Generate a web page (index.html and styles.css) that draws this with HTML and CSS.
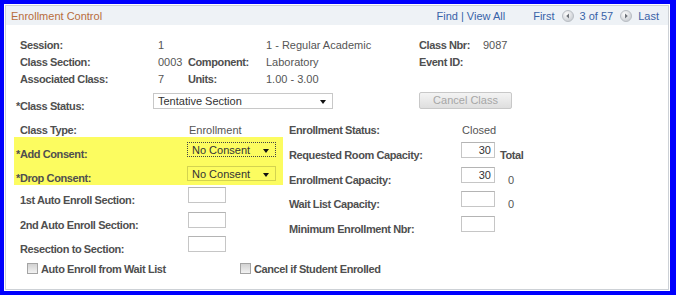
FILE: index.html
```html
<!DOCTYPE html>
<html lang="en">
<head>
    <meta charset="UTF-8">
    <title>Enrollment Control</title>
    <link rel="stylesheet" href="styles.css">
</head>
<body>
    <div class="frame">
        <div class="panel">
            <div class="panel-hd">
                <span class="panel-title">Enrollment Control</span>
                <div class="nav">
                    <span class="nav-link">Find | View All</span>
                    <span class="nav-link nav-first">First</span>
                    <svg class="nav-btn" width="12" height="12" viewBox="0 0 12 12">
                        <defs>
                            <radialGradient id="g1" cx="40%" cy="35%" r="65%">
                                <stop offset="0" stop-color="#ffffff"/>
                                <stop offset="1" stop-color="#c9cdd2"/>
                            </radialGradient>
                        </defs>
                        <circle cx="6" cy="6" r="5.5" fill="url(#g1)" stroke="#b9bec4" stroke-width="1"/>
                        <polygon points="7,3.5 4.2,6 7,8.5" fill="#6d7278"/>
                    </svg>
                    <span class="nav-count">3 of 57</span>
                    <svg class="nav-btn" width="12" height="12" viewBox="0 0 12 12">
                        <circle cx="6" cy="6" r="5.5" fill="url(#g1)" stroke="#b9bec4" stroke-width="1"/>
                        <polygon points="5,3.5 7.8,6 5,8.5" fill="#6d7278"/>
                    </svg>
                    <span class="nav-link">Last</span>
                </div>
            </div>

            <div class="panel-bd">
                <!-- 基本信息 -->
                <div class="info">
                    <span class="lbl">Session:</span><span class="val">1</span><span></span><span class="val">1 - Regular Academic</span><span class="lbl">Class Nbr:</span><span class="val">9087</span>
                    <span class="lbl">Class Section:</span><span class="val">0003</span><span class="lbl">Component:</span><span class="val">Laboratory</span><span class="lbl">Event ID:</span><span></span>
                    <span class="lbl">Associated Class:</span><span class="val">7</span><span class="lbl">Units:</span><span class="val">1.00 - 3.00</span><span></span><span></span>
                </div>

                <div class="status-row">
                    <span class="lbl req">*Class Status:</span>
                    <div class="sel sel-status"><span>Tentative Section</span><i class="caret"></i></div>
                    <span class="btn-disabled">Cancel Class</span>
                </div>

                <div class="lower">
                    <div class="col-left">
                        <div class="row row-type">
                            <span class="lbl">Class Type:</span>
                            <span class="val val-type">Enrollment</span>
                        </div>
                        <div class="consent">
                            <div class="row row-add">
                                <span class="lbl req">*Add Consent:</span>
                                <div class="sel sel-consent sel-focus"><span>No Consent</span><i class="caret"></i></div>
                            </div>
                            <div class="row row-drop">
                                <span class="lbl req">*Drop Consent:</span>
                                <div class="sel sel-consent"><span>No Consent</span><i class="caret"></i></div>
                            </div>
                        </div>
                        <div class="row row-1st">
                            <span class="lbl">1st Auto Enroll Section:</span>
                            <span class="inp inp-sec"></span>
                        </div>
                        <div class="row row-2nd">
                            <span class="lbl">2nd Auto Enroll Section:</span>
                            <span class="inp inp-sec"></span>
                        </div>
                        <div class="row row-resec">
                            <span class="lbl">Resection to Section:</span>
                            <span class="inp inp-sec"></span>
                        </div>
                    </div>

                    <div class="col-right">
                        <div class="row row-type">
                            <span class="lbl">Enrollment Status:</span>
                            <span class="val val-closed">Closed</span>
                        </div>
                        <div class="row row-r25">
                            <span class="lbl">Requested Room Capacity:</span>
                            <span class="inp inp-num">30</span>
                            <span class="lbl after">Total</span>
                        </div>
                        <div class="row row-r25">
                            <span class="lbl">Enrollment Capacity:</span>
                            <span class="inp inp-num">30</span>
                            <span class="val after-num">0</span>
                        </div>
                        <div class="row row-r24">
                            <span class="lbl">Wait List Capacity:</span>
                            <span class="inp inp-num"></span>
                            <span class="val after-num">0</span>
                        </div>
                        <div class="row row-r25">
                            <span class="lbl">Minimum Enrollment Nbr:</span>
                            <span class="inp inp-num"></span>
                        </div>
                    </div>
                </div>

                <div class="checks">
                    <label class="chk chk-first"><i class="box"></i>Auto Enroll from Wait List</label>
                    <label class="chk"><i class="box"></i>Cancel if Student Enrolled</label>
                </div>
            </div>
        </div>
    </div>
</body>
</html>
```

FILE: styles.css
```css
* {
    margin: 0;
    padding: 0;
    box-sizing: border-box;
}
body {
    font-family: "Liberation Sans", Arial, sans-serif;
    font-size: 11px;
    color: #555;
    background-color: #fff;
}
.frame {
    width: 676px;
    height: 295px;
    border-style: solid;
    border-color: #0000fe;
    border-width: 4px 6px 4px 4px;
}
.panel {
    margin: 1px;
    height: 285px;
    border: 1px solid #cdd1d6;
    overflow: hidden;
}
.panel-hd {
    display: flex;
    align-items: center;
    justify-content: space-between;
    height: 19px;
    padding: 0 9px 0 5px;
    background-color: #eef2f6;
}
.panel-title {
    color: #b86c3c;
}
.nav {
    display: flex;
    align-items: center;
}
.nav-link {
    color: #3862a8;
}
.nav-first {
    margin-left: 28px;
}
.nav-btn {
    margin: 0 6px 0 7px;
}
.nav-count {
    color: #3862a8;
}
.panel-bd {
    padding: 12px 0 0 8px;
}
.lbl {
    font-weight: 700;
    color: #4f4f4f;
    letter-spacing: -0.4px;
    white-space: nowrap;
}
.val {
    color: #555;
    white-space: nowrap;
}
.info {
    display: grid;
    grid-template-columns: 138px 30px 78px 153px 64px 1fr;
    grid-auto-rows: 17px;
    align-items: center;
    padding-left: 6px;
    line-height: 17px;
}
.status-row {
    display: flex;
    align-items: flex-end;
    height: 17px;
    margin-top: 4px;
    padding-left: 2px;
}
.status-row .lbl {
    width: 137px;
    line-height: 12px;
    margin-bottom: -3px;
}
.sel {
    position: relative;
    display: flex;
    align-items: center;
    padding-left: 4px;
    color: #333;
    border: 1px solid #c8c8c8;
}
.sel-status {
    width: 180px;
    height: 16px;
    background-color: #fff;
}
.caret {
    position: absolute;
    right: 6px;
    top: 50%;
    margin-top: -1px;
    border-left: 3.5px solid transparent;
    border-right: 3.5px solid transparent;
    border-top: 4px solid #111;
}
.btn-disabled {
    width: 93px;
    height: 17px;
    margin-left: 86px;
    line-height: 15px;
    text-align: center;
    color: #a6a6a6;
    border: 1px solid #c8c8c8;
    border-radius: 2px;
    background: linear-gradient(#f4f4f4, #dedede);
}
.lower {
    display: flex;
}
.col-left {
    width: 269px;
}
.col-right {
    margin-left: 6px;
}
.row {
    display: flex;
    align-items: flex-end;
}
.row .lbl {
    line-height: 12px;
    margin-bottom: -3px;
}
.col-left .lbl {
    width: 173px;
    padding-left: 6px;
}
.col-left .lbl.req {
    padding-left: 2px;
}
.col-right .lbl {
    width: 172px;
}
.row .val {
    line-height: 12px;
    margin-bottom: -3px;
}
.row-type {
    height: 24px;
}
.val-type {
    padding-left: 2px;
}
.val-closed {
    padding-left: 1px;
}
.consent {
    margin-top: 4px;
    padding-bottom: 4px;
    background-color: #fcfc60;
}
.row-add {
    height: 20px;
}
.row-drop {
    height: 24px;
}
.row-1st {
    height: 18px;
}
.row-2nd {
    height: 25px;
}
.row-resec {
    height: 24px;
}
.row-r25 {
    height: 25px;
}
.row-r24 {
    height: 24px;
}
.sel-consent {
    width: 89px;
    height: 15px;
    border-color: rgba(0, 0, 0, .16);
}
.sel-focus {
    border: 1px dotted #444;
}
.inp {
    height: 16px;
    border: 1px solid #c6c6c6;
    border-top-color: #b4b4b4;
    background-color: #fff;
    color: #333;
    line-height: 15px;
}
.inp-sec {
    width: 38px;
    margin-left: 1px;
}
.inp-num {
    width: 34px;
    padding-right: 3px;
    text-align: right;
}
.row .after {
    width: auto;
    margin-left: 5px;
}
.row .after-num {
    margin-left: 13px;
}
.checks {
    display: flex;
    align-items: center;
    height: 11px;
    margin-top: 11px;
    padding-left: 13px;
}
.chk {
    display: flex;
    align-items: center;
    font-weight: 700;
    color: #4f4f4f;
    letter-spacing: -0.4px;
    white-space: nowrap;
}
.chk-first {
    width: 213px;
}
.box {
    width: 11px;
    height: 11px;
    margin-right: 3px;
    border: 1px solid #a4a4a4;
    background: linear-gradient(#d2d2d2, #f2f2f2);
}
```
